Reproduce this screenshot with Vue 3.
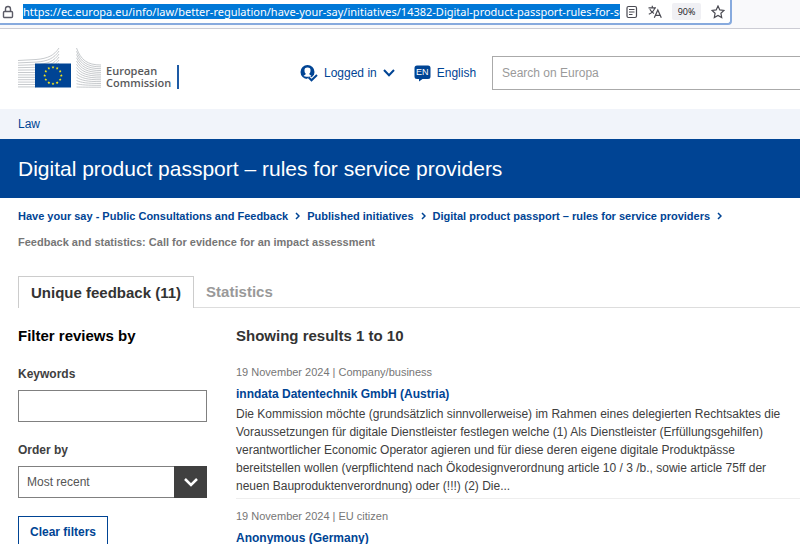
<script setup>
import { ref } from 'vue'

const url = ref('https://ec.europa.eu/info/law/better-regulation/have-your-say/initiatives/14382-Digital-product-passport-rules-for-service-providers/feedback_en')
const search = ref('')
const keywords = ref('')
const order = ref('recent')

const crumbs = [
  'Have your say - Public Consultations and Feedback',
  'Published initiatives',
  'Digital product passport – rules for service providers',
]

const reviews = [
  {
    date: '19 November 2024',
    type: 'Company/business',
    author: 'inndata Datentechnik GmbH (Austria)',
    text: 'Die Kommission möchte (grundsätzlich sinnvollerweise) im Rahmen eines delegierten Rechtsaktes die Voraussetzungen für digitale Dienstleister festlegen welche (1) Als Dienstleister (Erfüllungsgehilfen) verantwortlicher Economic Operator agieren und für diese deren eigene digitale Produktpässe bereitstellen wollen (verpflichtend nach Ökodesignverordnung article 10 / 3 /b., sowie article 75ff der neuen Bauproduktenverordnung) oder (!!!) (2) Die...',
  },
  {
    date: '19 November 2024',
    type: 'EU citizen',
    author: 'Anonymous (Germany)',
    text: '',
  },
]

// Sweeping lines of the emblem: left wing rises to the right, right wing falls.
const leftLines = Array.from({ length: 12 }, (_, i) => {
  const y = 13.5 + i * 2.4
  return i < 6
    ? `M0 ${y} L 18 ${y - 1 + i * 0.2} C 30 ${y - 2 + i * 0.3} 36 ${y - 5 + i * 0.5} 41 ${1 + i * 3}`
    : `M0 ${y} H18`
})
const rightLines = Array.from({ length: 13 }, (_, i) => {
  const start = 1 + i * 3.25
  const end = 18 + i * 1.85
  return `M58.5 ${start} C 63 ${start + (end - start) * 0.7} 69 ${end} 83 ${end}`
})
const stars = Array.from({ length: 12 }, (_, i) => {
  const centre = (i * Math.PI) / 6
  const cx = 35 + 8.3 * Math.sin(centre)
  const cy = 28.5 - 8.3 * Math.cos(centre)
  return Array.from({ length: 10 }, (_, k) => {
    const r = k % 2 ? 0.7 : 1.5
    const a = (k * Math.PI) / 5
    return `${cx + r * Math.sin(a)},${cy - r * Math.cos(a)}`
  }).join(' ')
})
</script>

<template>
  <div class="page">
    <div class="browser">
      <div class="address">
        <svg class="lock" viewBox="0 0 12 14" width="12" height="14" aria-hidden="true">
          <rect x="1.5" y="6.5" width="9" height="6" rx="1" />
          <path d="M3.5 6.5V4a2.5 2.5 0 0 1 5 0v2.5" />
        </svg>
        <input v-model="url" class="url" type="text" aria-label="Address" />
        <button class="tool" type="button" aria-label="Reader view">
          <svg viewBox="0 0 12 14" width="12" height="14">
            <rect x="1" y="1.500" width="9.500" height="11" rx="1.500" />
            <path d="M3 4.500h5.500M3 7h5.500M3 9.500h3.500" />
          </svg>
        </button>
        <button class="tool" type="button" aria-label="Translate">
          <svg viewBox="0 0 14 14" width="14" height="14">
            <path d="M.5 2.800H8M4.300.8v2M6.800 2.800C6 5.500 3.500 8 .8 9.200M1.800 4.300C3 6.500 4.500 7.800 6 8.500" />
            <path d="M6.300 12.800 9.800 5l3.500 7.800M7.500 10.300h4.600" />
          </svg>
        </button>
        <button class="zoom" type="button">90%</button>
        <button class="tool" type="button" aria-label="Bookmark">
          <svg viewBox="0 0 14 14" width="14" height="14">
            <path d="m7 1 1.800 3.900 4.200.5-3.100 2.900.8 4.200L7 10.400l-3.700 2.100.8-4.200L1 5.400l4.200-.5z" />
          </svg>
        </button>
      </div>
    </div>

    <header class="header">
      <a class="brand" href="#" aria-label="European Commission">
        <svg viewBox="0 0 84 42" width="84" height="42" aria-hidden="true">
          <g class="wing">
            <path v-for="d in leftLines" :key="d" :d="d" />
            <path v-for="d in rightLines" :key="d" :d="d" />
          </g>
          <rect x="17" y="16.500" width="36" height="24" fill="#004494" />
          <polygon v-for="s in stars" :key="s" :points="s" fill="#f5e51b" />
        </svg>
        <span class="brand-name">European<br />Commission</span>
      </a>
      <nav class="account" aria-label="Account and language">
        <button class="link-button" type="button">
          <svg viewBox="0 0 18 17" width="18" height="17" aria-hidden="true">
            <circle cx="7.500" cy="7" r="7" fill="#004494" />
            <path d="M7.500 2.500a3 3 0 0 1 3 3.300c0 1.500-.7 2.500-1.300 3 .1 1.100 1.800 1.300 2.300 2.300-1.500 1-6.500 1-8 0 .5-1 2.200-1.200 2.300-2.300-.6-.5-1.300-1.500-1.300-3a3 3 0 0 1 3-3.300z" fill="#fff" />
            <path d="m8.500 12.300 3 3 5.500-5.300" fill="none" stroke="#fff" stroke-width="4" />
            <path d="m8.500 12.300 3 3 5.500-5.300" fill="none" stroke="#004494" stroke-width="2" />
          </svg>
          Logged in
          <svg viewBox="0 0 12 8" width="12" height="8" aria-hidden="true">
            <path d="m1 1 5 5.200L11 1" fill="none" stroke="#004494" stroke-width="2" />
          </svg>
        </button>
        <button class="link-button" type="button">
          <span class="lang">
            <svg viewBox="0 0 17 17" width="17" height="17" aria-hidden="true">
              <path d="M3 .5h11q2.500 0 2.500 2.500v8.500q0 2.500-2.500 2.500H8.500L5 16.500V14H3Q.5 14 .5 11.500V3Q.5.5 3 .5z" fill="#004494" />
            </svg>
            <span class="lang-code">EN</span>
          </span>
          English
        </button>
      </nav>
      <input v-model="search" class="search" type="search" placeholder="Search on Europa" aria-label="Search on Europa" />
    </header>

    <nav class="site"><a href="#">Law</a></nav>
    <div class="banner"><h1>Digital product passport – rules for service providers</h1></div>

    <main class="main">
      <nav class="crumbs" aria-label="Breadcrumb">
        <template v-for="crumb in crumbs" :key="crumb">
          <a href="#">{{ crumb }}</a>
          <svg viewBox="0 0 5 8" width="5" height="8" aria-hidden="true">
            <path d="m1 1 3 3-3 3" fill="none" stroke="#004494" stroke-width="1.500" />
          </svg>
        </template>
        <span class="current">Feedback and statistics: Call for evidence for an impact assessment</span>
      </nav>

      <div class="tabs" role="tablist">
        <button class="tab active" type="button" role="tab" aria-selected="true">Unique feedback (11)</button>
        <button class="tab" type="button" role="tab" aria-selected="false">Statistics</button>
      </div>

      <div class="columns">
        <form class="filters" @submit.prevent>
          <h2>Filter reviews by</h2>
          <label for="keywords">Keywords</label>
          <input id="keywords" v-model="keywords" class="field" type="text" />
          <label for="order">Order by</label>
          <div class="select">
            <select id="order" v-model="order" class="field">
              <option value="recent">Most recent</option>
              <option value="oldest">Oldest first</option>
            </select>
            <span class="select-arrow">
              <svg viewBox="0 0 14 9" width="14" height="9" aria-hidden="true">
                <path d="m1 1 6 6 6-6" fill="none" stroke="#fff" stroke-width="2.500" />
              </svg>
            </span>
          </div>
          <button class="clear" type="reset">Clear filters</button>
        </form>

        <section class="results">
          <h2>Showing results 1 to 10</h2>
          <article v-for="review in reviews" :key="review.author" class="review">
            <p class="meta">{{ review.date }} | {{ review.type }}</p>
            <h3><a href="#">{{ review.author }}</a></h3>
            <p v-if="review.text" class="text">{{ review.text }}</p>
          </article>
        </section>
      </div>
    </main>
  </div>
</template>

<style>
html {
  scrollbar-width: none;
}
</style>

<style scoped>
.page {
  font-family: "Liberation Sans", Arial, sans-serif;
  font-size: 12px;
  color: #404040;
  background: #fff;
}
.page * {
  box-sizing: border-box;
}
h1, h2, h3, p {
  margin: 0;
}
a {
  color: #004494;
  text-decoration: none;
}
button {
  font: inherit;
  color: inherit;
  background: none;
  border: 0;
  padding: 0;
}
input, select {
  font: inherit;
  border-radius: 0;
}

.browser {
  height: 29px;
  padding-right: 68px;
  background: #f9f9fb;
  border-bottom: 1px solid #ccccd4;
}
.address {
  display: flex;
  align-items: center;
  height: 25px;
  padding-right: 5px;
  background: #fff;
  border: solid #87aade;
  border-width: 0 2px 2px 0;
  border-radius: 0 0 4px 0;
}
.lock {
  flex: none;
  margin: 0 9px 0 2px;
  fill: none;
  stroke: #5b5b66;
  stroke-width: 1.4;
}
.url {
  flex: 1;
  min-width: 0;
  height: 15px;
  margin-right: 6px;
  padding: 0;
  border: 0;
  background: #0078d7;
  color: #fff;
  font-family: "Noto Sans", sans-serif;
  font-size: 11px;
}
.tool {
  display: flex;
}
.tool svg {
  fill: none;
  stroke: #4a4a52;
  stroke-width: 1.2;
}
.tool + .tool {
  margin-left: 10px;
}
.zoom {
  width: 29px;
  height: 17px;
  margin: 0 10px;
  border-radius: 2px;
  background: #f0f0f4;
  color: #15141a;
  font-family: "Open Sans", sans-serif;
  font-size: 9px;
  line-height: 17px;
}

.header {
  display: flex;
  align-items: center;
  height: 80px;
  padding: 8px 0 0 18px;
}
.brand {
  display: flex;
  align-items: flex-end;
  gap: 4px;
  width: 282px;
  padding-bottom: 11px;
}
.wing {
  fill: none;
  stroke: #b9bcc0;
  stroke-width: 0.8;
}
.brand-name {
  padding-right: 6px;
  border-right: 2px solid #1d5aa5;
  color: #58595b;
  font-family: "Open Sans", sans-serif;
  font-size: 11px;
  font-weight: 600;
  line-height: 12px;
}
.account {
  display: flex;
  gap: 19px;
  width: 192px;
}
.link-button {
  display: flex;
  align-items: center;
  gap: 6px;
  color: #004494;
  white-space: nowrap;
}
.lang {
  position: relative;
  display: flex;
}
.lang-code {
  position: absolute;
  inset: 0;
  color: #fff;
  font-size: 9px;
  line-height: 15px;
  text-align: center;
}
.search {
  flex: 1;
  min-width: 0;
  height: 34px;
  padding: 0 9px;
  border: 1px solid #aaa;
  border-right: 0;
  background: #fff;
  appearance: none;
}
.search::placeholder {
  color: #9a9a9a;
}

.site {
  height: 30px;
  padding-left: 18px;
  background: #f1f4fa;
  line-height: 30px;
}
.banner {
  display: flex;
  align-items: center;
  height: 59px;
  padding-left: 18px;
  background: #004494;
}
h1 {
  color: #fff;
  font-size: 21px;
  font-weight: 400;
}

.main {
  padding: 5px 0 0 18px;
}
.crumbs {
  display: flex;
  flex-wrap: wrap;
  align-items: center;
  column-gap: 7px;
  font-size: 11px;
  font-weight: 700;
  line-height: 26px;
}
.current {
  flex-basis: 100%;
  color: #767676;
}
.tabs {
  display: flex;
  margin-top: 21px;
  border-bottom: 1px solid #ddd;
}
.tab {
  height: 31px;
  padding: 0 12px;
  color: #999;
  font-size: 15px;
  font-weight: 700;
}
.tab.active {
  margin-bottom: -1px;
  height: 32px;
  padding-bottom: 1px;
  border: 1px solid #ccc;
  border-bottom: 0;
  background: #fff;
  color: #333;
}
.columns {
  display: grid;
  grid-template-columns: 189px 1fr;
  gap: 29px;
  padding-top: 18px;
}
h2 {
  font-size: 15px;
  line-height: 20px;
}
.filters {
  display: flex;
  flex-direction: column;
}
.filters h2 {
  margin-bottom: 20px;
  color: #000;
}
label {
  margin-bottom: 8px;
  font-weight: 700;
  line-height: 16px;
}
.field {
  width: 100%;
  height: 32px;
  padding: 0 8px;
  border: 1px solid #808080;
  background: #fff;
  color: #555;
  appearance: none;
}
#keywords {
  margin-bottom: 20px;
}
.select {
  position: relative;
  display: flex;
}
.select-arrow {
  position: absolute;
  inset: 0 0 0 auto;
  display: flex;
  align-items: center;
  justify-content: center;
  width: 33px;
  background: #404040;
  pointer-events: none;
}
.clear {
  align-self: flex-start;
  height: 32px;
  margin-top: 18px;
  padding: 0 11px;
  border: 1px solid #004494;
  color: #004494;
  font-weight: 700;
}
.results h2 {
  margin-bottom: 18px;
  color: #333;
}
.review {
  padding-bottom: 3px;
  border-bottom: 1px solid #eee;
}
.review + .review {
  padding-top: 9px;
}
.meta {
  color: #767676;
  font-size: 11px;
  line-height: 16px;
}
h3 {
  margin: 5px 0 2px;
  font-size: 12px;
  line-height: 18px;
}
.text {
  padding-right: 16px;
  line-height: 18px;
}
</style>
